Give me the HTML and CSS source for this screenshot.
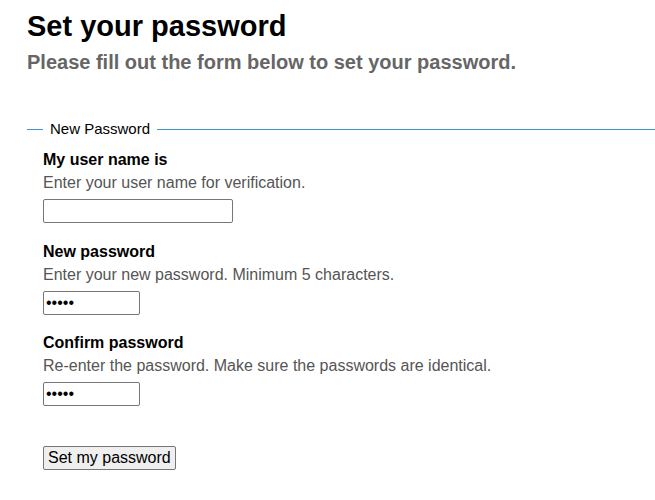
FILE: index.html
```html
<!DOCTYPE html>
<html lang="en">
<head>
<meta charset="utf-8">
<title>Set your password</title>
<link rel="stylesheet" href="styles.css">
</head>
<body>
<main class="page">
  <h1 class="title">Set your password</h1>
  <p class="subtitle">Please fill out the form below to set your password.</p>
  <form class="form" onsubmit="return false">
    <fieldset class="fieldset">
      <legend class="legend">New Password</legend>
      <div class="field">
        <label class="field-label" for="username">My user name is</label>
        <p class="field-help">Enter your user name for verification.</p>
        <input class="input input-wide" id="username" type="text">
      </div>
      <div class="field">
        <label class="field-label" for="password">New password</label>
        <p class="field-help">Enter your new password. Minimum 5 characters.</p>
        <input class="input input-short" id="password" type="password" value="12345">
      </div>
      <div class="field">
        <label class="field-label" for="confirm">Confirm password</label>
        <p class="field-help">Re-enter the password. Make sure the passwords are identical.</p>
        <input class="input input-short" id="confirm" type="password" value="12345">
      </div>
      <div class="actions">
        <button class="button" type="submit">Set my password</button>
      </div>
    </fieldset>
  </form>
</main>
</body>
</html>
```
FILE: styles.css
```css
html, body {
  margin: 0;
  padding: 0;
  background: #ffffff;
}

body {
  font-family: "Liberation Sans", Arial, sans-serif;
  font-size: 16px;
  color: #000000;
}

.page {
  padding: 9px 0 0 27px;
}

.title {
  margin: 0;
  font-size: 29px;
  line-height: 34px;
  font-weight: bold;
  color: #000000;
}

.subtitle {
  margin: 8px 0 0;
  font-size: 20px;
  line-height: 23px;
  font-weight: bold;
  color: #666666;
}

.form {
  margin: 46px 0 0;
}

.fieldset {
  margin: 0;
  padding: 11px 0 0 16px;
  border: none;
  border-top: 1px solid #3b96cc;
  min-width: 0;
}

.legend {
  padding: 0 7px;
  margin-left: 0;
  font-size: 15px;
  line-height: 18px;
  color: #000000;
}

.field {
  margin-bottom: 17.5px;
}

.field-label {
  display: block;
  font-weight: bold;
  line-height: 22px;
  color: #000000;
}

.field-help {
  margin: 0;
  line-height: 24px;
  color: #555555;
}

.input {
  display: block;
  box-sizing: border-box;
  margin-top: 4px;
  height: 24px;
  padding: 1px 2px;
  border: 1px solid #767676;
  border-radius: 2px;
  background: #ffffff;
  font-family: "Liberation Sans", Arial, sans-serif;
  font-size: 16px;
  color: #000000;
}

.input-wide {
  width: 190px;
}

.input-short {
  width: 97px;
}

.actions {
  padding-top: 22.5px;
}

.button {
  box-sizing: border-box;
  height: 24px;
  padding: 0 4px;
  border: 1px solid #767676;
  border-radius: 2px;
  background: #efefef;
  font-family: "Liberation Sans", Arial, sans-serif;
  font-size: 16px;
  color: #000000;
}
```
